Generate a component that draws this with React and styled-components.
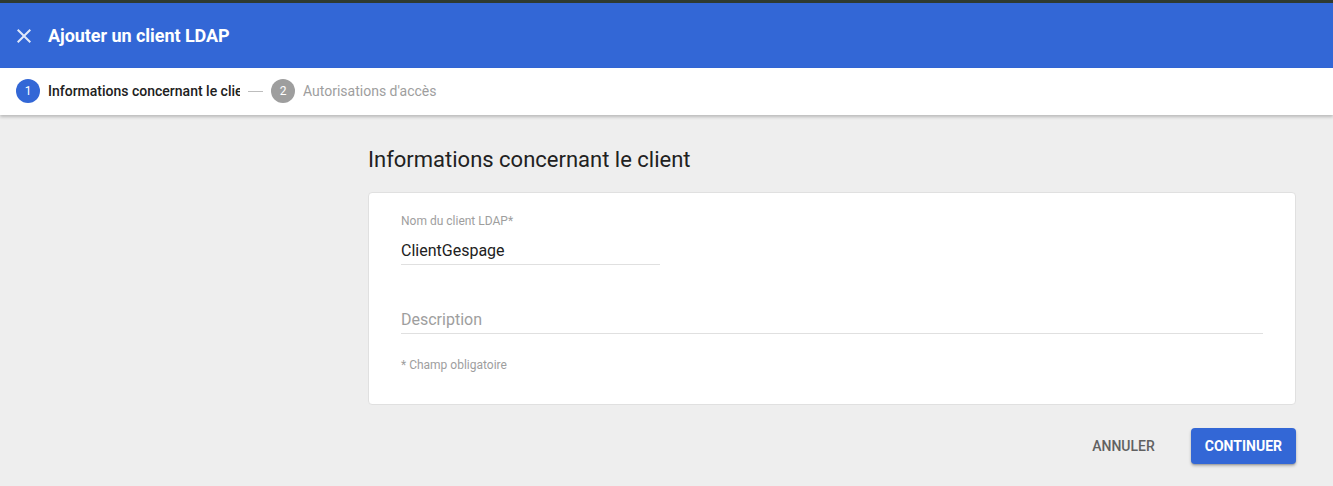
import React from "react";
import styled, { createGlobalStyle } from "styled-components";

const Global = createGlobalStyle`
  html, body { margin: 0; padding: 0; }
  body {
    font-family: Roboto, "Liberation Sans", Arial, sans-serif;
    background: #eeeeee;
    width: 1333px;
    height: 486px;
    overflow: hidden;
  }
  * { box-sizing: border-box; }
`;

const Page = styled.div`
  display: flex;
  flex-direction: column;
  height: 486px;
  background: #eeeeee;
`;

const TopStrip = styled.div`
  height: 3px;
  background: #2f3a30;
`;

const Header = styled.header`
  height: 65px;
  background: #3367d6;
  display: flex;
  align-items: center;
  padding: 0 12px;
  gap: 12px;
  color: #fff;
`;

const IconButton = styled.button`
  width: 24px;
  height: 24px;
  padding: 0;
  border: none;
  background: none;
  display: flex;
  align-items: center;
  justify-content: center;
  color: rgba(255, 255, 255, 0.85);
  cursor: pointer;
`;

const Title = styled.h1`
  margin: 0;
  font-size: 18px;
  font-weight: 700;
  letter-spacing: -0.05px;
  padding-bottom: 1px;
`;

const Stepper = styled.nav`
  height: 47px;
  background: #fff;
  display: flex;
  align-items: center;
  padding: 0 16px 1px;
  box-shadow: 0 2px 3px rgba(0, 0, 0, 0.22);
  position: relative;
  z-index: 1;
`;

const Step = styled.div`
  display: flex;
  align-items: center;
  gap: 8px;
`;

const StepNum = styled.span`
  width: 24px;
  height: 24px;
  border-radius: 50%;
  background: ${(p) => (p.$active ? "#3367d6" : "#9e9e9e")};
  color: #fff;
  font-size: 12px;
  display: flex;
  align-items: center;
  justify-content: center;
`;

const StepLabel = styled.span`
  font-size: 14px;
  color: ${(p) => (p.$active ? "#212121" : "#9e9e9e")};
  font-weight: ${(p) => (p.$active ? 500 : 400)};
  white-space: nowrap;
  overflow: hidden;
  max-width: ${(p) => p.$max || "none"};
`;

const Connector = styled.span`
  width: 15px;
  height: 1px;
  background: #bdbdbd;
  margin: 0 8px;
`;

const Main = styled.main`
  flex: 1;
  display: flex;
  flex-direction: column;
  padding: 33px 37px 0 368px;
`;

const SectionTitle = styled.h2`
  margin: 0 0 20px;
  font-size: 22px;
  font-weight: 400;
  color: #212121;
  line-height: 24px;
`;

const Card = styled.section`
  background: #fff;
  border: 1px solid #e0e0e0;
  border-radius: 4px;
  padding: 21px 32px 30px;
  height: 213px;
  display: flex;
  flex-direction: column;
`;

const Field = styled.div`
  display: flex;
  flex-direction: column;
  width: ${(p) => p.$width || "100%"};
  border-bottom: 1px solid #e0e0e0;
`;

const FieldLabel = styled.label`
  font-size: 12px;
  color: #9e9e9e;
  line-height: 14px;
`;

const FieldValue = styled.div`
  font-size: 16px;
  line-height: 20px;
  color: ${(p) => (p.$placeholder ? "#9e9e9e" : "#212121")};
  padding: ${(p) => (p.$placeholder ? "0 0 3px" : "13px 0 3px")};
`;

const Spacer = styled.div`
  height: ${(p) => p.$h}px;
`;

const Hint = styled.p`
  margin: 24px 0 0;
  font-size: 12px;
  color: #9e9e9e;
  line-height: 14px;
`;

const Actions = styled.div`
  display: flex;
  justify-content: flex-end;
  align-items: center;
  gap: 20px;
  margin-top: 23px;
`;

const Button = styled.button`
  height: 36px;
  padding: 0 ${(p) => (p.$primary ? "14px" : "16px")};
  border: none;
  border-radius: 4px;
  font-family: inherit;
  font-size: 14px;
  font-weight: ${(p) => (p.$primary ? 700 : 500)};
  text-transform: uppercase;
  background: ${(p) => (p.$primary ? "#3367d6" : "transparent")};
  color: ${(p) => (p.$primary ? "#fff" : "#616161")};
  box-shadow: ${(p) =>
    p.$primary ? "0 2px 3px rgba(0,0,0,0.25), 0 1px 1px rgba(0,0,0,0.12)" : "none"};
  cursor: pointer;
`;

const CloseIcon = () => (
  <svg width="24" height="24" viewBox="0 0 24 24" fill="currentColor">
    <path d="M19 6.41L17.59 5 12 10.59 6.41 5 5 6.41 10.59 12 5 17.59 6.41 19 12 13.41 17.59 19 19 17.59 13.41 12z" />
  </svg>
);

export default function App() {
  return (
    <>
      <Global />
      <Page>
        <TopStrip />
        <Header>
          <IconButton aria-label="Fermer">
            <CloseIcon />
          </IconButton>
          <Title>Ajouter un client LDAP</Title>
        </Header>
        <Stepper>
          <Step>
            <StepNum $active>1</StepNum>
            <StepLabel $active $max="192px">Informations concernant le client</StepLabel>
          </Step>
          <Connector />
          <Step>
            <StepNum>2</StepNum>
            <StepLabel>Autorisations d'accès</StepLabel>
          </Step>
        </Stepper>
        <Main>
          <SectionTitle>Informations concernant le client</SectionTitle>
          <Card>
            <Field $width="259px">
              <FieldLabel>Nom du client LDAP*</FieldLabel>
              <FieldValue>ClientGespage</FieldValue>
            </Field>
            <Spacer $h={45} />
            <Field>
              <FieldValue $placeholder>Description</FieldValue>
            </Field>
            <Hint>* Champ obligatoire</Hint>
          </Card>
          <Actions>
            <Button>Annuler</Button>
            <Button $primary>Continuer</Button>
          </Actions>
        </Main>
      </Page>
    </>
  );
}
